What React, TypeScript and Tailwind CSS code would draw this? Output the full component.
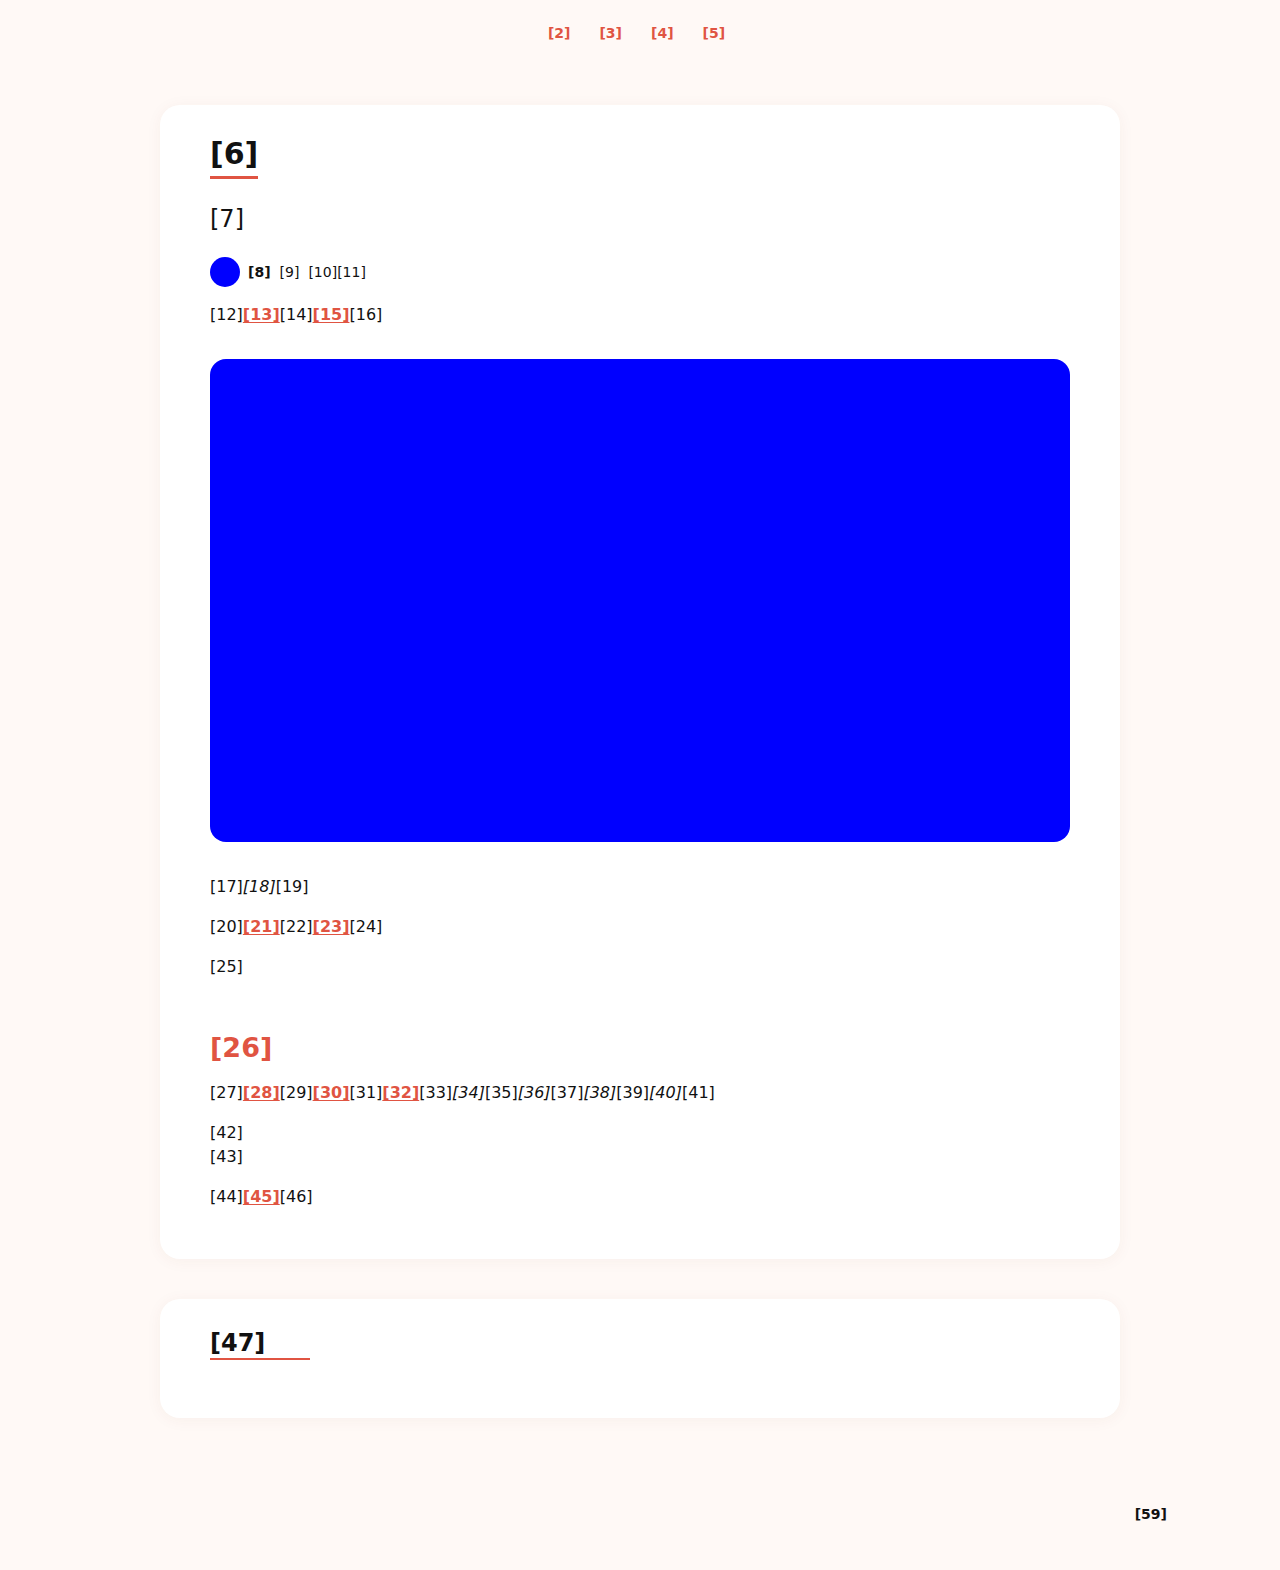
const red = "text-[#e05442]";

function Link({ children }: { children: React.ReactNode }) {
    return <a href="#" className={`${red} font-bold underline underline-offset-2`}>{children}</a>;
}

function App() {
    return (
        <div className="min-h-[1570px] bg-[#fff9f6] font-['DejaVu_Sans',sans-serif] text-[#111]">
            <nav className="flex justify-center gap-[29px] pt-[23px] pr-[7px] text-[14px] font-bold leading-5">
                <a href="#" className={red}>[2]</a>
                <a href="#" className={red}>[3]</a>
                <a href="#" className={red}>[4]</a>
                <a href="#" className={red}>[5]</a>
            </nav>

            <main className="mx-auto mt-[62px] flex w-[960px] flex-col gap-10">
                <section className="rounded-[20px] bg-white px-[50px] pt-[30px] pb-[50px] shadow-[0_2px_16px_rgba(120,60,30,0.05)]">
                    <h1 className="inline-block border-b-[3px] border-[#e05442] pb-[3px] text-[30px] font-bold leading-[38px]">[6]</h1>
                    <p className="mt-[25px] text-[24px] leading-[30px]">[7]</p>
                    <div className="mt-[23px] flex items-center gap-2 text-[14px] leading-5">
                        <span className="h-[30px] w-[30px] rounded-full bg-[#0000ff]"></span>
                        <b>[8]</b>
                        <span className="ml-[1px]">[9]</span>
                        <span className="ml-[1px]">[10][11]</span>
                    </div>
                    <p className="mt-[16px] text-[16px] leading-6">
                        [12]<Link>[13]</Link>[14]<Link>[15]</Link>[16]
                    </p>
                    <div className="mt-[32px] h-[483px] w-full rounded-[16px] bg-[#0000ff]"></div>

                    <div className="mt-[33px] flex flex-col gap-4 text-[16px] leading-6">
                        <p>[17]<i>[18]</i>[19]</p>
                        <p>[20]<Link>[21]</Link>[22]<Link>[23]</Link>[24]</p>
                        <p>[25]</p>
                    </div>

                    <h2 className={`${red} mt-[52px] text-[27px] font-bold leading-[34px]`}>[26]</h2>
                    <div className="mt-[16px] flex flex-col gap-4 text-[16px] leading-6">
                        <p>
                            [27]<Link>[28]</Link>[29]<Link>[30]</Link>[31]<Link>[32]</Link>[33]<i>[34]</i>[35]<i>[36]</i>[37]<i>[38]</i>[39]<i>[40]</i>[41]
                        </p>
                        <p>[42]<br />[43]</p>
                        <p>[44]<Link>[45]</Link>[46]</p>
                    </div>
                </section>

                <section className="rounded-[20px] bg-white px-[50px] pt-[30px] pb-[58px] shadow-[0_2px_16px_rgba(120,60,30,0.05)]">
                    <h2 className="w-[100px] border-b-2 border-[#e05442] text-[24px] font-bold leading-[29px]">[47]</h2>
                </section>
            </main>

            <footer className="mx-auto mt-[86px] flex w-[1054px] justify-end text-[14px] font-bold leading-5">
                <span>[59]</span>
            </footer>
        </div>
    );
}

export default App;
